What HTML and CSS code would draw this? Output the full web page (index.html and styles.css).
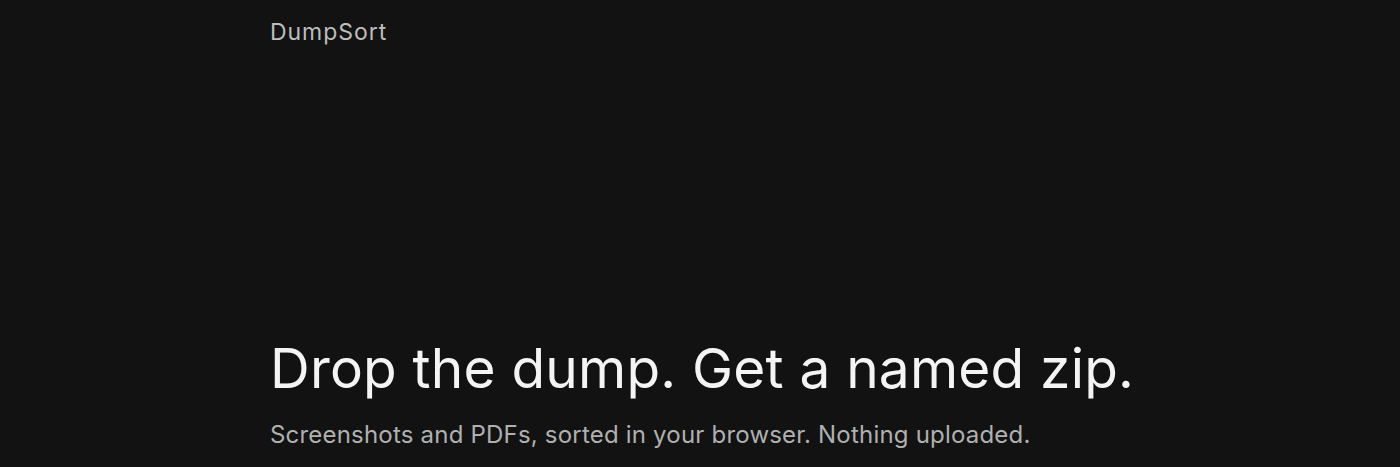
FILE: index.html
```html
<!DOCTYPE html>
<html lang="en">
<head>
<meta charset="utf-8">
<title>DumpSort</title>
<link rel="stylesheet" href="styles.css">
</head>
<body>
<div class="page">
  <header class="topbar">
    <span class="brand">DumpSort</span>
  </header>
  <section class="hero">
    <h1 class="title">Drop the dump. Get a named zip.</h1>
    <p class="subtitle">Screenshots and PDFs, sorted in your browser. Nothing uploaded.</p>
  </section>
</div>
</body>
</html>
```
FILE: styles.css
```css
html, body {
  margin: 0;
  padding: 0;
  background: #121212;
}
body {
  font-family: Inter, "Liberation Sans", sans-serif;
  color: #f2f2f2;
}
.page {
  max-width: 860px;
  margin: 0 auto;
}
.topbar {
  padding-top: 21px;
  display: flex;
}
.brand {
  font-size: 23px;
  line-height: 23px;
  color: #bdbdbd;
  letter-spacing: 0.95px;
}
.hero {
  padding-top: 294px;
}
.title {
  margin: 0;
  font-size: 55px;
  font-weight: 400;
  line-height: 60px;
  color: #f4f4f4;
  letter-spacing: 0.2px;
  white-space: nowrap;
}
.subtitle {
  margin: 21px 0 0;
  font-size: 24px;
  line-height: 32px;
  color: #b0b0b0;
  letter-spacing: 0.2px;
  white-space: nowrap;
}
```
